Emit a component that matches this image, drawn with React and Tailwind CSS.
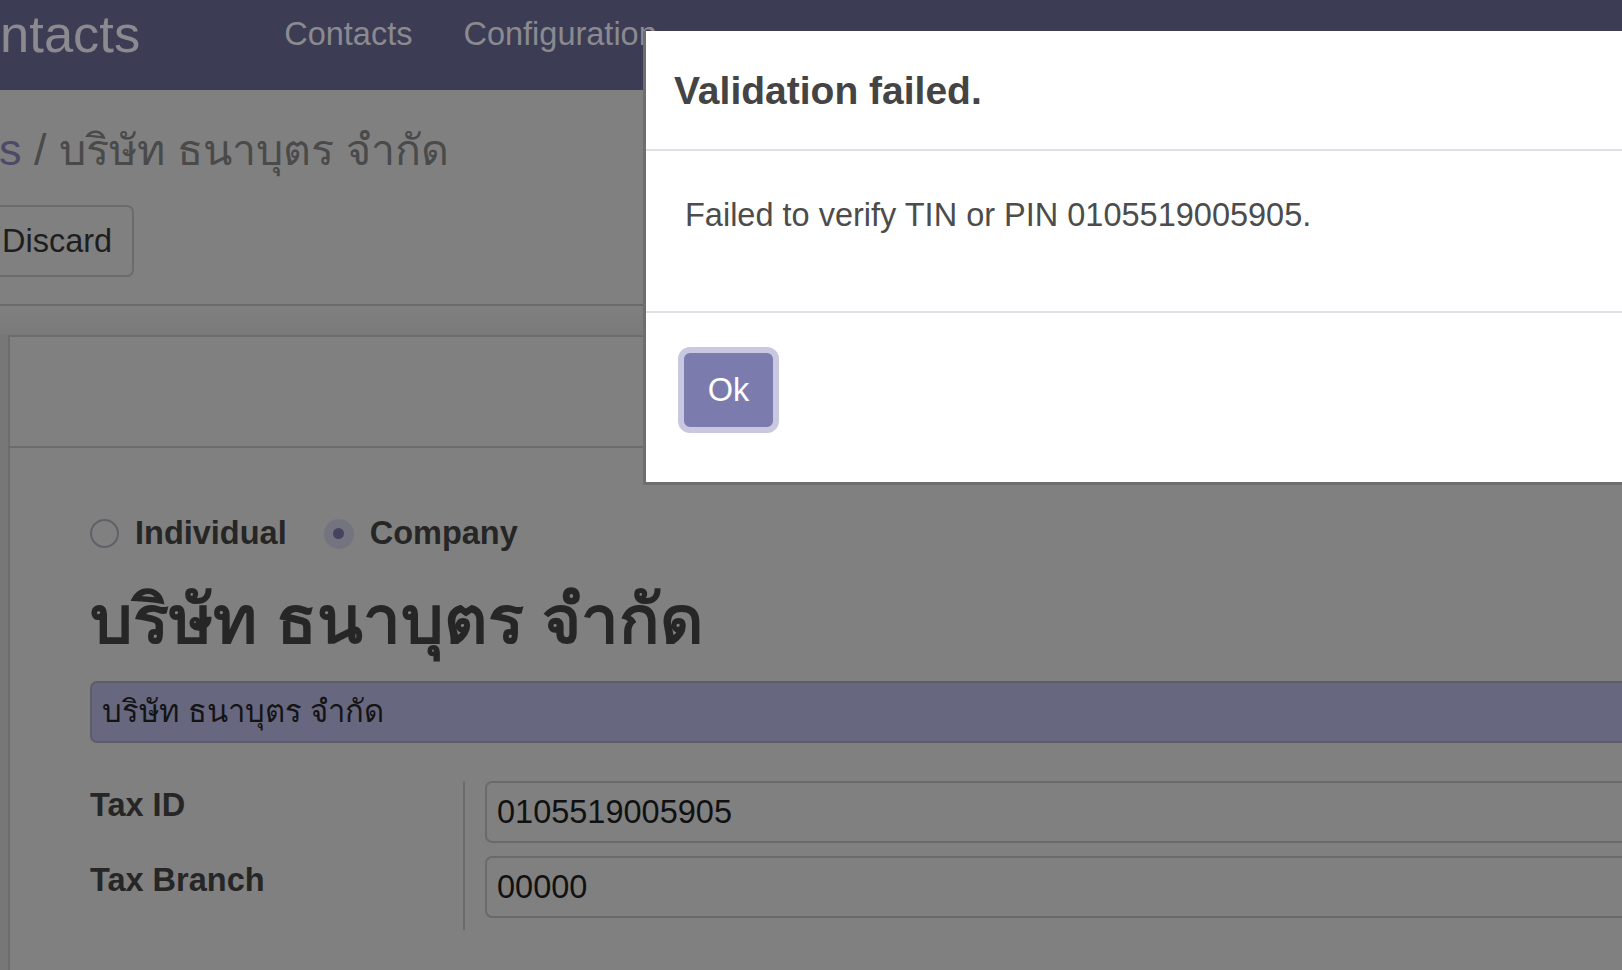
import React from "react";

const TH_NAME = "บริษัท ธนาบุตร จำกัด";

const Radio = ({ checked, label }) => (
    <div className="flex items-center gap-[16px]">
        {checked ? (
            <span className="w-[30px] h-[30px] rounded-full bg-[#737480] flex items-center justify-center">
                <span className="w-[11px] h-[11px] rounded-full bg-[#45435f]" />
            </span>
        ) : (
            <span className="w-[29px] h-[29px] rounded-full border-2 border-[#5f6166]" />
        )}
        <span className="text-[32.5px] font-bold leading-none text-[#262626]">{label}</span>
    </div>
);

const FieldRow = ({ label, value, last = false }) => (
    <>
        <div className={`border-r-2 border-[#6c6c6c] text-[32.5px] font-bold leading-[48px] text-[#262626] ${last ? 'pb-[12px]' : 'pb-[13px]'}`}>
            {label}
        </div>
        <div className={`pl-[20px] ${last ? 'pb-[12px]' : 'pb-[13px]'}`}>
            <div className="h-[62px] rounded-l-[7px] border-2 border-r-0 border-[#6a6a6a] flex items-center pl-[10px] text-[32.5px] text-[#111111]">
                {value}
            </div>
        </div>
    </>
);

export default function App() {
    return (
        <div className="relative w-[1622px] h-[970px] overflow-hidden bg-[#808080] font-['Liberation_Sans','DejaVu_Sans',sans-serif]">
            {/* navbar */}
            <div className="h-[90px] bg-[#3d3c55] flex items-center pb-[22px] text-[#8a8a8f]">
                <span className="ml-[-67px] text-[52.5px] leading-none">Contacts</span>
                <nav className="ml-[144px] flex gap-[51px] text-[32.5px] leading-none">
                    <span>Contacts</span>
                    <span>Configuration</span>
                </nav>
            </div>

            {/* control panel */}
            <div className="border-b-2 border-[#6a6a6a] pb-[27px]">
                <div className="mt-[33px] ml-[-1px] text-[45px] leading-[54px] text-[#4a4a4a] whitespace-nowrap">
                    <span className="text-[#4b4b68]">s</span> / <span className="text-[43px]">{TH_NAME}</span>
                </div>
                <div className="mt-[28px] flex">
                    <button className="h-[72px] w-[136px] -ml-[2px] pl-[4px] text-left border-2 border-l-0 border-[#6b6b6b] rounded-r-[7px] text-[32.5px] text-[#1e1e1e]">
                        Discard
                    </button>
                </div>
            </div>

            {/* form */}
            <div className="flex pt-[29px] h-full bg-gradient-to-b from-[#808080] to-[#7a7a7a] bg-no-repeat bg-[length:100%_29px]">
                <div className="w-[8px] bg-[#777777]" />
                <div className="flex-1 border-2 border-r-0 border-[#6b6c70] bg-[#808080]">
                    <div className="h-[111px] border-b-2 border-[#6b6c70]" />
                    <div className="pl-[80px] pt-[71px]">
                        <div className="flex items-center gap-[37px] h-[29px]">
                            <Radio label="Individual" />
                            <Radio checked label="Company" />
                        </div>
                        <h1 className="mt-[33px] text-[67px] leading-[78px] font-bold text-[#262626] whitespace-nowrap">
                            {TH_NAME}
                        </h1>
                        <div className="mt-[22px] h-[62px] rounded-l-[7px] bg-[#676780] border-2 border-r-0 border-[#5d5d6a] flex items-center pl-[10px] text-[31px] text-[#141414]">
                            {TH_NAME}
                        </div>
                        <div className="mt-[38px] grid grid-cols-[375px_1fr]">
                            <FieldRow label="Tax ID" value="0105519005905" />
                            <FieldRow label="Tax Branch" value="00000" last />
                        </div>
                    </div>
                </div>
            </div>

            {/* dialog */}
            <div className="absolute left-[643px] top-[31px] w-[1020px] h-[454px] bg-white border-l-[3px] border-b-[3px] border-[#6e6e6e] text-[#4c4c4c] flex flex-col">
                <div className="h-[120px] border-b-2 border-[#dee2e6] flex items-center pl-[28px]">
                    <h4 className="text-[39px] font-bold leading-none text-[#444444]">Validation failed.</h4>
                </div>
                <div className="h-[160px] pl-[39px] pt-[40px] text-[32.5px] leading-[48px]">
                    Failed to verify TIN or PIN 0105519005905.
                </div>
                <div className="flex-1 border-t-2 border-[#dee2e6] pl-[32px] pt-[34px]">
                    <button className="w-[101px] h-[86px] rounded-[12px] border-[6px] border-[#c9c8e0] bg-[#7c7bad] text-white text-[32.5px] leading-none">
                        Ok
                    </button>
                </div>
            </div>
        </div>
    );
}
